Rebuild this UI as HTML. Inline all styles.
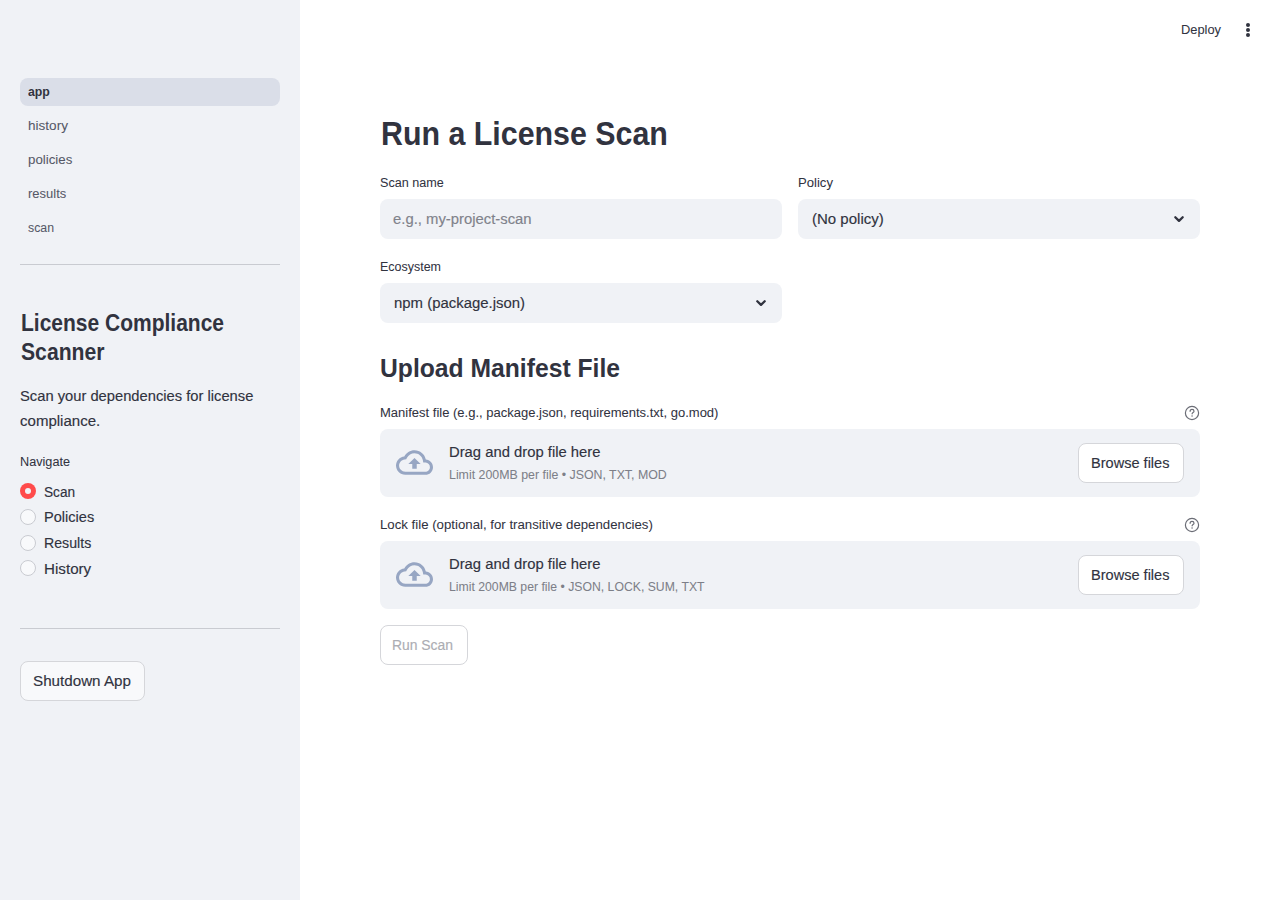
<!DOCTYPE html>
<html><head><meta charset="utf-8"><title>License Compliance Scanner</title>
<style>
html,body{margin:0;padding:0;}
body{width:1280px;height:900px;position:relative;overflow:hidden;background:#fff;font-family:"Liberation Sans",sans-serif;color:#31333f;}
.t{position:absolute;white-space:nowrap;}
.box{position:absolute;}
.sb{position:absolute;left:0;top:0;width:300px;height:900px;background:#f0f2f6;}
.inp{background:#f0f2f6;border-radius:8px;}
.btn{border:1px solid #d5d6da;border-radius:8px;box-sizing:border-box;}
</style></head><body>
<div class="sb"></div>
<div class="box" style="left:20px;top:78px;width:260px;height:28px;border-radius:8px;background:#dadee8"></div>
<div class="t" style="left:28.10px;top:84.35px;font-size:13.02px;line-height:16.27px;font-weight:700;color:#31333f;transform:scaleX(0.9450);transform-origin:0 0;-webkit-text-stroke:0;">app</div>
<div class="t" style="left:28.00px;top:118.05px;font-size:13.02px;line-height:16.27px;font-weight:400;color:#555867;transform:scaleX(1.0414);transform-origin:0 0;-webkit-text-stroke:0.05px currentColor;">history</div>
<div class="t" style="left:28.00px;top:152.05px;font-size:13.02px;line-height:16.27px;font-weight:400;color:#555867;transform:scaleX(1.0218);transform-origin:0 0;-webkit-text-stroke:0.05px currentColor;">policies</div>
<div class="t" style="left:28.00px;top:186.05px;font-size:13.02px;line-height:16.27px;font-weight:400;color:#555867;transform:scaleX(0.9972);transform-origin:0 0;-webkit-text-stroke:0.05px currentColor;">results</div>
<div class="t" style="left:28.00px;top:220.05px;font-size:13.02px;line-height:16.27px;font-weight:400;color:#555867;transform:scaleX(0.9464);transform-origin:0 0;-webkit-text-stroke:0.05px currentColor;">scan</div>
<div class="box" style="left:20px;top:264px;width:260px;height:1px;background:#c9cbd1"></div>
<div class="t" style="left:21.00px;top:309.21px;font-size:23.25px;line-height:29.06px;font-weight:700;color:#31333f;transform:scaleX(0.9029);transform-origin:0 0;-webkit-text-stroke:0;">License Compliance</div>
<div class="t" style="left:20.70px;top:338.21px;font-size:23.25px;line-height:29.06px;font-weight:700;color:#31333f;transform:scaleX(0.9103);transform-origin:0 0;-webkit-text-stroke:0;">Scanner</div>
<div class="t" style="left:20.20px;top:387.34px;font-size:14.88px;line-height:18.6px;font-weight:400;color:#31333f;transform:scaleX(0.9902);transform-origin:0 0;-webkit-text-stroke:0.15px currentColor;">Scan your dependencies for license</div>
<div class="t" style="left:20.20px;top:412.34px;font-size:14.88px;line-height:18.6px;font-weight:400;color:#31333f;transform:scaleX(1.0106);transform-origin:0 0;-webkit-text-stroke:0.15px currentColor;">compliance.</div>
<div class="t" style="left:20.30px;top:454.15px;font-size:13.02px;line-height:16.27px;font-weight:400;color:#31333f;transform:scaleX(0.9742);transform-origin:0 0;-webkit-text-stroke:0.05px currentColor;">Navigate</div>
<div class="t" style="left:44.20px;top:483.14px;font-size:14.88px;line-height:18.6px;font-weight:400;color:#31333f;transform:scaleX(0.9167);transform-origin:0 0;-webkit-text-stroke:0.15px currentColor;">Scan</div>
<div class="t" style="left:44.20px;top:508.04px;font-size:14.88px;line-height:18.6px;font-weight:400;color:#31333f;transform:scaleX(0.9798);transform-origin:0 0;-webkit-text-stroke:0.15px currentColor;">Policies</div>
<div class="t" style="left:44.20px;top:534.04px;font-size:14.88px;line-height:18.6px;font-weight:400;color:#31333f;transform:scaleX(0.9526);transform-origin:0 0;-webkit-text-stroke:0.15px currentColor;">Results</div>
<div class="t" style="left:44.20px;top:560.24px;font-size:14.88px;line-height:18.6px;font-weight:400;color:#31333f;transform:scaleX(1.0199);transform-origin:0 0;-webkit-text-stroke:0.15px currentColor;">History</div>
<div class="box" style="left:20px;top:483px;width:16px;height:16px;border-radius:50%;background:#ff4b4b"></div>
<div class="box" style="left:24.75px;top:487.75px;width:6.5px;height:6.5px;border-radius:50%;background:#f0f2f6"></div>
<div class="box" style="left:20px;top:509px;width:16px;height:16px;border-radius:50%;background:#f8f9fb;border:1px solid #c9cbd1;box-sizing:border-box"></div>
<div class="box" style="left:20px;top:535px;width:16px;height:16px;border-radius:50%;background:#f8f9fb;border:1px solid #c9cbd1;box-sizing:border-box"></div>
<div class="box" style="left:20px;top:560px;width:16px;height:16px;border-radius:50%;background:#f8f9fb;border:1px solid #c9cbd1;box-sizing:border-box"></div>
<div class="box" style="left:20px;top:628px;width:260px;height:1px;background:#c9cbd1"></div>
<div class="box btn" style="left:20px;top:661px;width:124.5px;height:39.5px;background:#f8f9fb"></div>
<div class="t" style="left:33.10px;top:672.34px;font-size:14.88px;line-height:18.6px;font-weight:400;color:#31333f;transform:scaleX(1.0211);transform-origin:0 0;-webkit-text-stroke:0.15px currentColor;">Shutdown App</div>
<div class="t" style="left:1180.70px;top:21.95px;font-size:13.02px;line-height:16.27px;font-weight:400;color:#31333f;transform:scaleX(0.9878);transform-origin:0 0;-webkit-text-stroke:0.05px currentColor;">Deploy</div>
<div class="box" style="left:1246px;top:22.8px;width:4px;height:4px;border-radius:50%;background:#31333f"></div>
<div class="box" style="left:1246px;top:27.9px;width:4px;height:4px;border-radius:50%;background:#31333f"></div>
<div class="box" style="left:1246px;top:33px;width:4px;height:4px;border-radius:50%;background:#31333f"></div>
<div class="t" style="left:380.70px;top:113.27px;font-size:33.48px;line-height:41.85px;font-weight:700;color:#31333f;transform:scaleX(0.9071);transform-origin:0 0;-webkit-text-stroke:0;">Run a License Scan</div>
<div class="t" style="left:380.20px;top:174.85px;font-size:13.02px;line-height:16.27px;font-weight:400;color:#31333f;transform:scaleX(0.9684);transform-origin:0 0;-webkit-text-stroke:0.05px currentColor;">Scan name</div>
<div class="box inp" style="left:380px;top:199px;width:402px;height:40px"></div>
<div class="t" style="left:393.00px;top:210.34px;font-size:14.88px;line-height:18.6px;font-weight:400;color:#80828b;transform:scaleX(0.9980);transform-origin:0 0;-webkit-text-stroke:0.15px currentColor;">e.g., my-project-scan</div>
<div class="t" style="left:797.90px;top:175.05px;font-size:13.02px;line-height:16.27px;font-weight:400;color:#31333f;transform:scaleX(1.0068);transform-origin:0 0;-webkit-text-stroke:0.05px currentColor;">Policy</div>
<div class="box inp" style="left:798px;top:199px;width:402px;height:40px"></div>
<div class="t" style="left:812.00px;top:209.94px;font-size:14.88px;line-height:18.6px;font-weight:400;color:#31333f;transform:scaleX(1.0095);transform-origin:0 0;-webkit-text-stroke:0.15px currentColor;">(No policy)</div>
<div class="t" style="left:380.20px;top:259.35px;font-size:13.02px;line-height:16.27px;font-weight:400;color:#31333f;transform:scaleX(0.9581);transform-origin:0 0;-webkit-text-stroke:0.05px currentColor;">Ecosystem</div>
<div class="box inp" style="left:380px;top:283px;width:402px;height:40px"></div>
<div class="t" style="left:394.10px;top:293.84px;font-size:14.88px;line-height:18.6px;font-weight:400;color:#31333f;transform:scaleX(1.0027);transform-origin:0 0;-webkit-text-stroke:0.15px currentColor;">npm (package.json)</div>
<svg class="box" style="left:1172px;top:214px" width="14" height="10" viewBox="0 0 14 10"><path d="M3.3 3.2 L7 6.9 L10.7 3.2" fill="none" stroke="#31333f" stroke-width="2.3" stroke-linecap="round" stroke-linejoin="round"/></svg>
<svg class="box" style="left:754px;top:298px" width="14" height="10" viewBox="0 0 14 10"><path d="M3.3 3.2 L7 6.9 L10.7 3.2" fill="none" stroke="#31333f" stroke-width="2.3" stroke-linecap="round" stroke-linejoin="round"/></svg>
<div class="t" style="left:380.20px;top:352.20px;font-size:26.04px;line-height:32.55px;font-weight:700;color:#31333f;transform:scaleX(0.9482);transform-origin:0 0;-webkit-text-stroke:0;">Upload Manifest File</div>
<div class="t" style="left:380.30px;top:405.05px;font-size:13.02px;line-height:16.27px;font-weight:400;color:#31333f;transform:scaleX(0.9996);transform-origin:0 0;-webkit-text-stroke:0.05px currentColor;">Manifest file (e.g., package.json, requirements.txt, go.mod)</div>
<svg class="box" style="left:1184px;top:405px" width="16" height="16" viewBox="0 0 16 16"><circle cx="8" cy="8" r="6.6" fill="none" stroke="#6b6d76" stroke-width="1.2"/><path d="M6.1 6.3c0-1.1.85-1.9 1.95-1.9s1.95.75 1.95 1.75c0 1.3-1.9 1.4-1.9 2.7" fill="none" stroke="#6b6d76" stroke-width="1.2" stroke-linecap="round"/><circle cx="8.05" cy="11.1" r="0.75" fill="#6b6d76"/></svg>
<div class="box inp" style="left:380px;top:429px;width:820px;height:68px"></div>
<svg class="box" style="left:396px;top:443.8px" width="37" height="37" viewBox="0 0 24 24"><path fill="#97a6c3" d="M19.35 10.04C18.67 6.59 15.64 4 12 4 9.11 4 6.6 5.64 5.35 8.04 2.34 8.36 0 10.91 0 14c0 3.31 2.69 6 6 6h13c2.76 0 5-2.24 5-5 0-2.64-2.05-4.78-4.65-4.96zM19 18H6c-2.21 0-4-1.79-4-4 0-2.05 1.53-3.76 3.56-3.97l1.07-.11.5-.95C8.080 7.14 9.94 6 12 6c2.62 0 4.88 1.86 5.39 4.43l.3 1.5 1.53.11c1.56.1 2.78 1.41 2.78 2.96 0 1.650-1.350 3-3 3zM8 13h2.55v3h2.9v-3H16l-4-4z"/></svg>
<div class="t" style="left:449.10px;top:443.24px;font-size:14.88px;line-height:18.6px;font-weight:400;color:#31333f;transform:scaleX(0.9953);transform-origin:0 0;-webkit-text-stroke:0.15px currentColor;">Drag and drop file here</div>
<div class="t" style="left:449.30px;top:466.90px;font-size:13.02px;line-height:16.27px;font-weight:400;color:#7d7f88;transform:scaleX(0.9499);transform-origin:0 0;-webkit-text-stroke:0.05px currentColor;">Limit 200MB per file • JSON, TXT, MOD</div>
<div class="box btn" style="left:1078px;top:443px;width:106px;height:40px;background:#fff"></div>
<div class="t" style="left:1091.10px;top:454.34px;font-size:14.88px;line-height:18.6px;font-weight:400;color:#31333f;transform:scaleX(0.9788);transform-origin:0 0;-webkit-text-stroke:0.15px currentColor;">Browse files</div>
<div class="t" style="left:380.30px;top:517.05px;font-size:13.02px;line-height:16.27px;font-weight:400;color:#31333f;transform:scaleX(1.0165);transform-origin:0 0;-webkit-text-stroke:0.05px currentColor;">Lock file (optional, for transitive dependencies)</div>
<svg class="box" style="left:1184px;top:517px" width="16" height="16" viewBox="0 0 16 16"><circle cx="8" cy="8" r="6.6" fill="none" stroke="#6b6d76" stroke-width="1.2"/><path d="M6.1 6.3c0-1.1.85-1.9 1.95-1.9s1.95.75 1.95 1.75c0 1.3-1.9 1.4-1.9 2.7" fill="none" stroke="#6b6d76" stroke-width="1.2" stroke-linecap="round"/><circle cx="8.05" cy="11.1" r="0.75" fill="#6b6d76"/></svg>
<div class="box inp" style="left:380px;top:541px;width:820px;height:68px"></div>
<svg class="box" style="left:396px;top:555.8px" width="37" height="37" viewBox="0 0 24 24"><path fill="#97a6c3" d="M19.35 10.04C18.67 6.59 15.64 4 12 4 9.11 4 6.6 5.64 5.35 8.04 2.34 8.36 0 10.91 0 14c0 3.31 2.69 6 6 6h13c2.76 0 5-2.24 5-5 0-2.64-2.05-4.78-4.65-4.96zM19 18H6c-2.21 0-4-1.79-4-4 0-2.05 1.53-3.76 3.56-3.97l1.07-.11.5-.95C8.080 7.14 9.94 6 12 6c2.62 0 4.88 1.86 5.39 4.43l.3 1.5 1.53.11c1.56.1 2.78 1.41 2.78 2.96 0 1.650-1.350 3-3 3zM8 13h2.55v3h2.9v-3H16l-4-4z"/></svg>
<div class="t" style="left:449.10px;top:555.24px;font-size:14.88px;line-height:18.6px;font-weight:400;color:#31333f;transform:scaleX(0.9953);transform-origin:0 0;-webkit-text-stroke:0.15px currentColor;">Drag and drop file here</div>
<div class="t" style="left:449.30px;top:578.90px;font-size:13.02px;line-height:16.27px;font-weight:400;color:#7d7f88;transform:scaleX(0.9397);transform-origin:0 0;-webkit-text-stroke:0.05px currentColor;">Limit 200MB per file • JSON, LOCK, SUM, TXT</div>
<div class="box btn" style="left:1078px;top:555px;width:106px;height:40px;background:#fff"></div>
<div class="t" style="left:1091.10px;top:566.34px;font-size:14.88px;line-height:18.6px;font-weight:400;color:#31333f;transform:scaleX(0.9788);transform-origin:0 0;-webkit-text-stroke:0.15px currentColor;">Browse files</div>
<div class="box btn" style="left:380px;top:625px;width:88px;height:40px;background:#fff"></div>
<div class="t" style="left:392.30px;top:636.34px;font-size:14.88px;line-height:18.6px;font-weight:400;color:#acadb3;transform:scaleX(0.9338);transform-origin:0 0;-webkit-text-stroke:0.15px currentColor;">Run Scan</div>
</body></html>
